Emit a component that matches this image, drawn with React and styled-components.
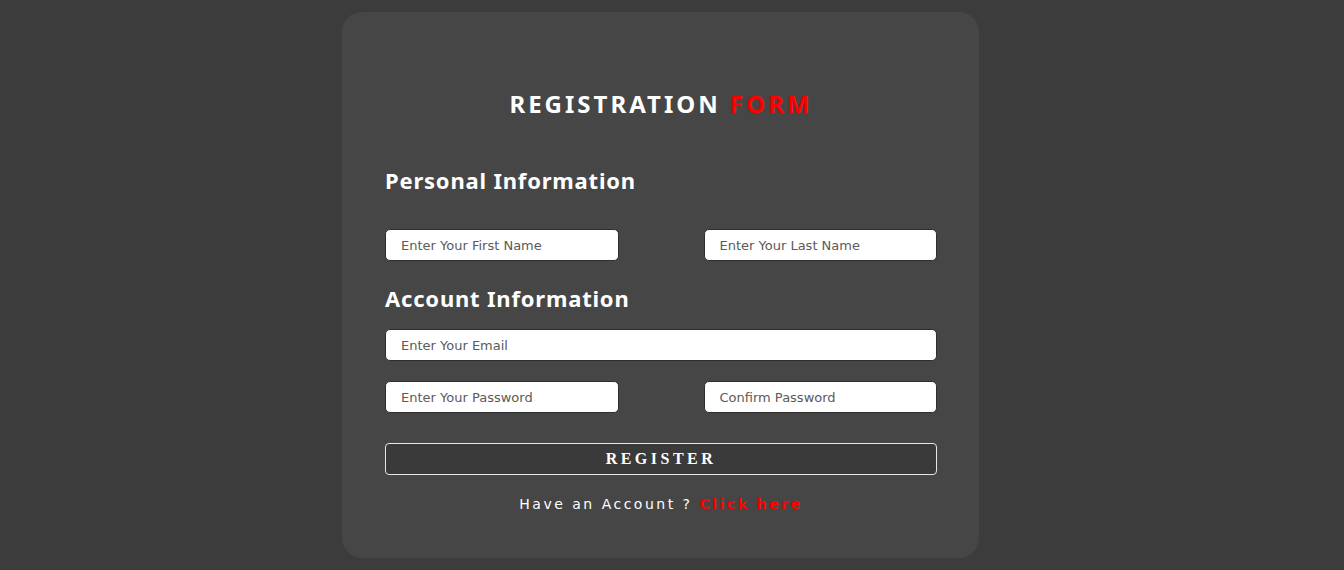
import React from 'react';
import styled, { createGlobalStyle } from 'styled-components';

const Global = createGlobalStyle`
    html, body {
        margin: 0;
        padding: 0;
        background: #3c3c3c;
    }
    body {
        font-family: "Noto Sans", "Open Sans", sans-serif;
    }
`

const Page = styled.div`
    min-height: 570px;
    display: flex;
    justify-content: center;
    padding: 12px 23px 0 0;
    box-sizing: border-box;
`

const Card = styled.form`
    width: 637px;
    height: 546px;
    box-sizing: border-box;
    background: #464646;
    border-radius: 20px;
    padding: 78px 42px 0 43px;
    display: flex;
    flex-direction: column;
`

const Title = styled.h1`
    margin: 0;
    text-align: center;
    font-size: 24px;
    line-height: 28px;
    font-weight: 700;
    letter-spacing: 3px;
    color: #fff;

    span {
        color: #ff0000;
    }
`

const Heading = styled.h2`
    margin: ${({ $top }) => $top}px 0 0;
    font-size: 22px;
    line-height: 26px;
    font-weight: 700;
    letter-spacing: 0.8px;
    color: #fff;
`

const Row = styled.div`
    display: grid;
    grid-template-columns: ${({ $cols }) => ($cols === 2 ? '1fr 1fr' : '1fr')};
    column-gap: 85px;
    margin-top: ${({ $top }) => $top}px;
`

const Input = styled.input`
    height: 32px;
    box-sizing: border-box;
    border: 1px solid #2e2e2e;
    border-radius: 5px;
    background: #fff;
    padding: 0 15px;
    font-family: "DejaVu Sans", sans-serif;
    font-size: 13px;
    color: #333;
    outline: none;

    &::placeholder {
        color: #5a5a5a;
    }
`

const Button = styled.button`
    margin-top: 30px;
    height: 32px;
    background: #3a3a3a;
    border: 1px solid #e6e6e6;
    border-radius: 4px;
    color: #fff;
    font-family: "Liberation Serif", "DejaVu Serif", serif;
    font-weight: 700;
    font-size: 16px;
    letter-spacing: 3.5px;
    cursor: pointer;
`

const Footer = styled.p`
    margin: 19px 0 0;
    text-align: center;
    font-family: "DejaVu Sans", sans-serif;
    font-size: 14px;
    line-height: 20px;
    letter-spacing: 2.5px;
    color: #fff;

    a {
        color: #ff0000;
        font-weight: 700;
        text-decoration: none;
    }
`

const App = () => {
    return (
        <>
            <Global />
            <Page>
                <Card onSubmit={(e) => e.preventDefault()}>
                    <Title>
                        REGISTRATION <span>FORM</span>
                    </Title>
                    <Heading $top={49}>Personal Information</Heading>
                    <Row $cols={2} $top={36}>
                        <Input placeholder="Enter Your First Name" />
                        <Input placeholder="Enter Your Last Name" />
                    </Row>
                    <Heading $top={24}>Account Information</Heading>
                    <Row $top={18}>
                        <Input placeholder="Enter Your Email" />
                    </Row>
                    <Row $cols={2} $top={20}>
                        <Input type="password" placeholder="Enter Your Password" />
                        <Input type="password" placeholder="Confirm Password" />
                    </Row>
                    <Button type="submit">REGISTER</Button>
                    <Footer>
                        Have an Account ? <a href="#">Click here</a>
                    </Footer>
                </Card>
            </Page>
        </>
    )
}

export default App
